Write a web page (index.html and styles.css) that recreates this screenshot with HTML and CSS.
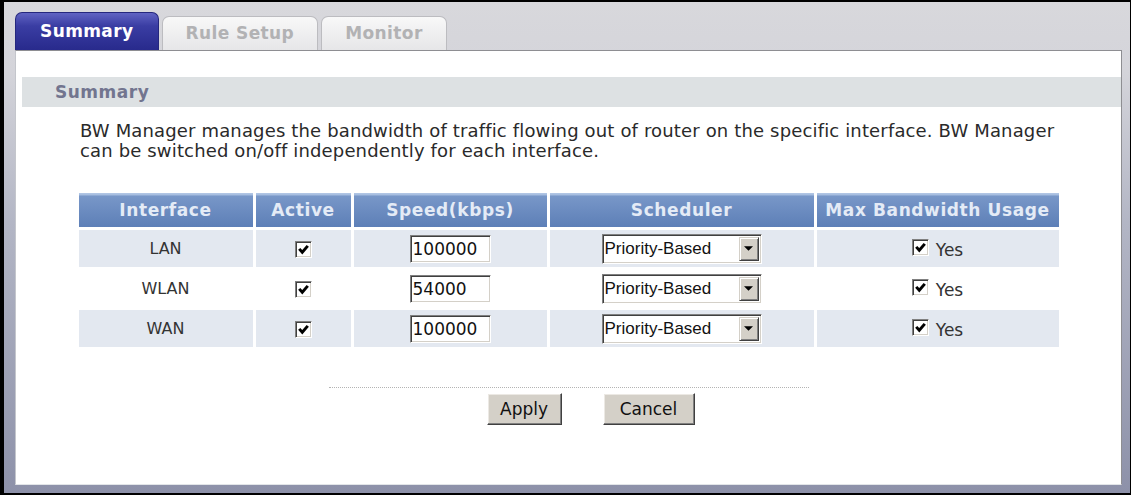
FILE: index.html
```html
<!DOCTYPE html>
<html lang="en">
<head>
  <meta charset="UTF-8">
  <title>BW Manager - Summary</title>
  <link rel="stylesheet" href="styles.css">
</head>
<body>
  <div class="window">
    <div class="tabs">
      <div class="tab active">Summary</div>
      <div class="tab">Rule Setup</div>
      <div class="tab">Monitor</div>
    </div>

    <div class="panel">
      <div class="section-title">Summary</div>

      <p class="desc">BW Manager manages the bandwidth of traffic flowing out of router on the specific interface. BW Manager<br>can be switched on/off independently for each interface.</p>

      <table class="bw-table">
        <thead>
          <tr>
            <th class="col-if">Interface</th>
            <th class="col-active">Active</th>
            <th class="col-speed">Speed(kbps)</th>
            <th class="col-sched">Scheduler</th>
            <th class="col-max">Max Bandwidth Usage</th>
          </tr>
        </thead>
        <tbody>
          <tr class="shade">
            <td>LAN</td>
            <td><span class="cb"><svg viewBox="0 0 9 9"><path d="M1 4 L3.5 6.8 L8 1.5" /></svg></span></td>
            <td><input class="speed" type="text" value="100000"></td>
            <td><span class="select"><span class="select-text">Priority-Based</span><span class="select-btn"><svg viewBox="0 0 8 4"><path d="M0 0 H8 L4 4 Z" /></svg></span></span></td>
            <td><span class="yes"><span class="cb"><svg viewBox="0 0 9 9"><path d="M1 4 L3.5 6.8 L8 1.5" /></svg></span>Yes</span></td>
          </tr>
          <tr>
            <td>WLAN</td>
            <td><span class="cb"><svg viewBox="0 0 9 9"><path d="M1 4 L3.5 6.8 L8 1.5" /></svg></span></td>
            <td><input class="speed" type="text" value="54000"></td>
            <td><span class="select"><span class="select-text">Priority-Based</span><span class="select-btn"><svg viewBox="0 0 8 4"><path d="M0 0 H8 L4 4 Z" /></svg></span></span></td>
            <td><span class="yes"><span class="cb"><svg viewBox="0 0 9 9"><path d="M1 4 L3.5 6.8 L8 1.5" /></svg></span>Yes</span></td>
          </tr>
          <tr class="shade">
            <td>WAN</td>
            <td><span class="cb"><svg viewBox="0 0 9 9"><path d="M1 4 L3.5 6.8 L8 1.5" /></svg></span></td>
            <td><input class="speed" type="text" value="100000"></td>
            <td><span class="select"><span class="select-text">Priority-Based</span><span class="select-btn"><svg viewBox="0 0 8 4"><path d="M0 0 H8 L4 4 Z" /></svg></span></span></td>
            <td><span class="yes"><span class="cb"><svg viewBox="0 0 9 9"><path d="M1 4 L3.5 6.8 L8 1.5" /></svg></span>Yes</span></td>
          </tr>
        </tbody>
      </table>

      <div class="divider"></div>

      <div class="actions">
        <button type="button" class="btn btn-apply">Apply</button>
        <button type="button" class="btn btn-cancel">Cancel</button>
      </div>
    </div>
  </div>
</body>
</html>
```

FILE: styles.css
```css
* {
  margin: 0;
  padding: 0;
  box-sizing: border-box;
}

html, body {
  width: 1131px;
  height: 495px;
  overflow: hidden;
}

body {
  font-family: "DejaVu Sans", Verdana, sans-serif;
  font-size: 18px;
  color: #2a2a2a;
  background: #000;
}

.window {
  height: 495px;
  border-style: solid;
  border-color: #000;
  border-width: 2px 1px 2px 4px;
  background: linear-gradient(#d8d8dc 0, #d4d4da 70px, #b3b6c5 220px, #8d91a9 100%);
  padding: 10px 8px 8px 11px;
  display: flex;
  flex-direction: column;
}

/* tabs */
.tabs {
  display: flex;
  align-items: flex-end;
  height: 38px;
  gap: 3px;
}

.tab {
  height: 34px;
  padding: 0 23px;
  border: 1px solid #bcbcc0;
  border-bottom: none;
  border-radius: 7px 7px 0 0;
  background: linear-gradient(#f8f8f8, #e6e6e8);
  color: #b2b2b4;
  font-weight: bold;
  font-size: 17px;
  letter-spacing: 0.4px;
  line-height: 33px;
}

.tab.active {
  height: 38px;
  padding: 0 24px;
  line-height: 37px;
  border-color: #25277e;
  background: linear-gradient(#6063c2 0, #3a3da3 35%, #282a8c 100%);
  color: #fff;
}

/* panel */
.panel {
  flex: 1;
  background: #fff;
  border: 1px solid;
  border-color: #8e8e92 #8e8e92 #e2e5e8 #c4c6cc;
}

.section-title {
  margin: 26px 0 0 6px;
  height: 30px;
  padding-left: 33px;
  background: #dde1e3;
  color: #72758f;
  font-weight: bold;
  font-size: 17px;
  letter-spacing: 0.5px;
  line-height: 30px;
}

.desc {
  margin-top: 14px;
  padding-left: 64px;
  font-size: 18px;
  letter-spacing: 0.15px;
  line-height: 20px;
  color: #2a2a2a;
}

/* table */
.bw-table {
  margin: 29px auto 0;
  width: 986px;
  border-collapse: separate;
  border-spacing: 3px;
  table-layout: fixed;
}

.col-if { width: 174px; }
.col-active { width: 95px; }
.col-speed { width: 193px; }
.col-sched { width: 264px; }
.col-max { width: 242px; }

.bw-table th {
  height: 34px;
  background: linear-gradient(#b4c8e6 0, #a4bcdf 2px, #7897c8 3px, #5d7fb7 100%);
  color: #e4ebf6;
  font-weight: bold;
  font-size: 17px;
  letter-spacing: 0.6px;
  white-space: nowrap;
}

.bw-table td {
  height: 37px;
  text-align: center;
  vertical-align: middle;
  font-size: 16px;
  color: #333;
  background: #fff;
}

.bw-table tr.shade td {
  background: #e3e8f0;
}

.cb {
  display: inline-flex;
  align-items: center;
  justify-content: center;
  width: 17px;
  height: 17px;
  background: #fff;
  border: 1px solid;
  border-color: #808080 #fff #fff #808080;
  box-shadow: inset 1px 1px #404040, inset -1px -1px #d4d0c8;
  vertical-align: middle;
}

.cb svg {
  width: 11px;
  height: 11px;
  fill: none;
  stroke: #000;
  stroke-width: 2.4;
}

.speed {
  width: 81px;
  height: 28px;
  padding: 0 2px;
  border: 1px solid;
  border-color: #808080 #fff #fff #808080;
  box-shadow: inset 1px 1px #404040, inset -1px -1px #d4d0c8;
  font-family: "DejaVu Sans", Verdana, sans-serif;
  font-size: 17px;
  color: #111;
  background: #fff;
  outline: none;
}

.select {
  display: inline-flex;
  align-items: center;
  width: 160px;
  height: 30px;
  padding: 2px;
  border: 1px solid;
  border-color: #808080 #fff #fff #808080;
  box-shadow: inset 1px 1px #404040, inset -1px -1px #d4d0c8;
  background: #fff;
  vertical-align: middle;
}

.select-text {
  flex: 1;
  text-align: left;
  font-family: "Liberation Sans", Arial, sans-serif;
  font-size: 17px;
  color: #111;
}

.select-btn {
  display: flex;
  align-items: center;
  justify-content: center;
  width: 20px;
  height: 24px;
  background: #d4d0c8;
  border: 1px solid;
  border-color: #d4d0c8 #404040 #404040 #d4d0c8;
  box-shadow: inset 1px 1px #fff, inset -1px -1px #808080;
}

.select-btn svg {
  width: 9px;
  height: 5px;
  fill: #000;
}

.yes {
  display: inline-flex;
  align-items: flex-end;
  gap: 7px;
  font-size: 17px;
  line-height: 20px;
}

.yes .cb {
  margin-bottom: 4px;
}

/* buttons */
.divider {
  width: 480px;
  margin: 37px auto 0;
  border-top: 1px dotted #b4b4b4;
}

.actions {
  display: flex;
  justify-content: center;
  gap: 41px;
  margin-top: 5px;
  padding-left: 44px;
}

.btn {
  height: 32px;
  background: #d4d0c8;
  border: 1px solid;
  border-color: #fff #404040 #404040 #fff;
  box-shadow: inset -1px -1px #808080, inset 1px 1px #ece9e4;
  font-family: "DejaVu Sans", Verdana, sans-serif;
  font-size: 17px;
  color: #111;
}

.btn-apply { width: 75px; }
.btn-cancel { width: 92px; }
```
